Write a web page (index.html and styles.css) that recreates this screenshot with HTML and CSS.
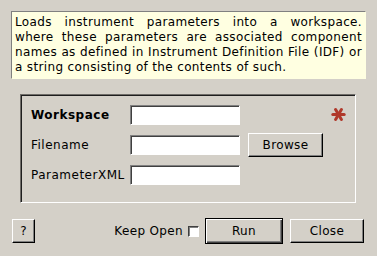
FILE: index.html
```html
<!DOCTYPE html>
<html lang="en">
<head>
    <meta charset="UTF-8">
    <title>LoadParameterFile</title>
    <link rel="stylesheet" href="styles.css">
</head>
<body>
    <div class="desc">
        <div class="line">Loads instrument parameters into a workspace.</div>
        <div class="line">where these parameters are associated component</div>
        <div class="line">names as defined in Instrument Definition File (IDF) or</div>
        <div class="line last">a string consisting of the contents of such.</div>
    </div>

    <div class="group">
        <div class="form">
            <label class="lbl bold">Workspace</label>
            <input class="field" type="text">
            <span></span>
            <svg class="star" viewBox="0 0 15 13" width="15" height="13">
                <g stroke="#b0392b" stroke-width="3" stroke-linecap="round">
                    <line x1="1.8" y1="6.5" x2="13.2" y2="6.5"/>
                    <line x1="4.6" y1="1.6" x2="10.4" y2="11.4"/>
                    <line x1="10.4" y1="1.6" x2="4.6" y2="11.4"/>
                </g>
            </svg>

            <label class="lbl">Filename</label>
            <input class="field" type="text">
            <button class="btn browse">Browse</button>
            <span></span>

            <label class="lbl">ParameterXML</label>
            <input class="field" type="text">
            <span></span>
            <span></span>
        </div>
    </div>

    <div class="actions">
        <button class="btn help">?</button>
        <span class="spacer"></span>
        <span class="keep">Keep Open</span>
        <span class="check"></span>
        <button class="btn default run">Run</button>
        <button class="btn close">Close</button>
    </div>
</body>
</html>
```

FILE: styles.css
```css
body {
    margin: 0;
    background-color: #d4d0c8;
    font-family: "DejaVu Sans", Verdana, sans-serif;
    font-size: 12px;
    letter-spacing: 0.35px;
    color: #000;
}
.desc {
    margin: 11px 11px 0 11px;
    padding: 3px;
    background-color: #ffffe1;
    border: 1px solid;
    border-color: #808080 #ffffe1 #ffffe1 #808080;
    line-height: 15px;
}
.desc .line {
    text-align: justify;
    text-align-last: justify;
    white-space: nowrap;
}
.desc .line.last {
    text-align-last: left;
}
.group {
    margin: 15px 21px 0 20px;
    height: 109px;
    box-sizing: border-box;
    padding: 10px 0 0 10px;
    border: 1px solid;
    border-color: #6f6c68 #fff #fff #6f6c68;
    box-shadow: inset 1px 1px 0 #1e1e1e;
}
.form {
    display: grid;
    grid-template-columns: 91px 110px 75px 15px;
    grid-auto-rows: 20px;
    column-gap: 8px;
    row-gap: 10px;
    align-items: center;
}
.lbl {
    white-space: nowrap;
    letter-spacing: 0.5px;
}
.bold {
    font-weight: bold;
}
.field {
    box-sizing: border-box;
    width: 110px;
    height: 20px;
    margin: 0;
    padding: 0 3px;
    background: #fff;
    border: 1px solid;
    border-color: #808080 #fff #fff #808080;
    box-shadow: inset 1px 1px 0 #404040;
    outline: none;
}
.star {
    display: block;
    margin-top: -1px;
}
.btn {
    box-sizing: border-box;
    margin: 0;
    padding: 0;
    background-color: #d4d0c8;
    font-family: "DejaVu Sans", Verdana, sans-serif;
    font-size: 12px;
    letter-spacing: 0.35px;
    color: #000;
    border: 1px solid;
    border-color: #fff #000 #000 #fff;
    box-shadow: inset -1px -1px 0 #808080;
}
.browse {
    width: 75px;
    height: 24px;
}
.actions {
    display: flex;
    align-items: center;
    height: 26px;
    margin-top: 15px;
    padding: 0 13px 0 12px;
}
.spacer {
    flex: 1;
}
.help {
    width: 23px;
    height: 24px;
}
.check {
    box-sizing: border-box;
    width: 11px;
    height: 11px;
    margin-left: 5px;
    background: #fff;
    border: 1px solid;
    border-color: #404040 #fff #fff #404040;
    box-shadow: inset 1px 1px 0 #808080;
}
.run {
    width: 78px;
    height: 26px;
    margin-left: 6px;
}
.default {
    border-color: #000;
    box-shadow: inset 1px 1px 0 #fff, inset -1px -1px 0 #404040, inset -2px -2px 0 #808080;
}
.close {
    width: 74px;
    height: 24px;
    margin-left: 7px;
}
```
